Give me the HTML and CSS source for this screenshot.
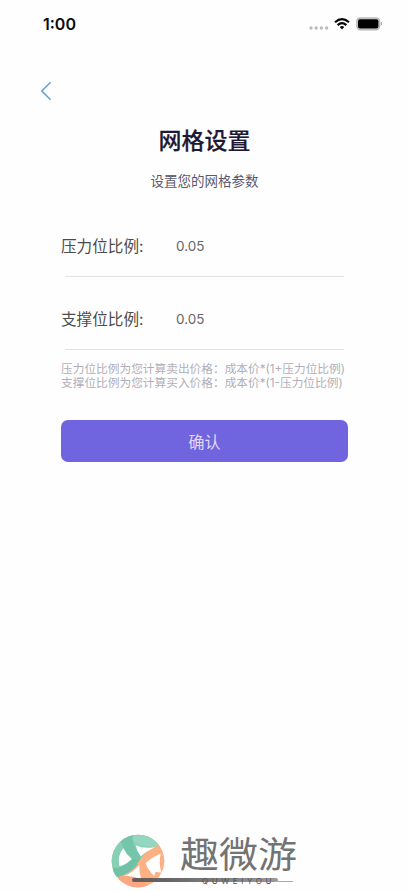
FILE: index.html
```html
<!DOCTYPE html>
<html lang="zh-CN">
<head>
<meta charset="utf-8">
<meta name="viewport" content="width=device-width, initial-scale=1">
<title>网格设置</title>
<link rel="stylesheet" href="styles.css">
</head>
<body>
<div class="screen">
  <header class="status">
    <span class="time">1:00</span>
    <div class="indicators">
      <svg class="dots" width="20" height="4" viewBox="0 0 20 4" fill="#bcbcbc"><circle cx="2" cy="2" r="1.7"/><circle cx="7.2" cy="2" r="1.7"/><circle cx="12.4" cy="2" r="1.7"/><circle cx="17.6" cy="2" r="1.7"/></svg>
      <svg class="wifi" width="16" height="12" viewBox="0 0 16 12" fill="none" stroke="#080808" stroke-width="2.2"><path d="M1 4.3Q8-1.9 15 4.3M3.6 7.1Q8 3.3 12.4 7.1"/><path d="M5.7 9Q8 7.1 10.3 9L8 11.5Z" fill="#080808" stroke="none"/></svg>
      <svg class="battery" width="27" height="14" viewBox="0 0 27 14"><rect x=".9" y=".9" width="22.6" height="11.8" rx="3.4" fill="#ddd" stroke="#b9b9b9" stroke-width="1.5"/><rect x="2" y="2.2" width="20.4" height="9.2" rx="2" fill="#000"/><path d="M24.8 4.8Q26.3 5.2 26.3 6.8T24.8 8.8Z" fill="#aaa"/></svg>
    </div>
  </header>
  <nav class="nav">
    <svg width="12" height="20" viewBox="0 0 12 20" fill="none" stroke="#64a2d6" stroke-width="1.6"><path d="M10.6 1.2L1.8 10l8.8 8.8"/></svg>
  </nav>
  <main class="main">
    <h1 class="title">网格设置</h1>
    <p class="subtitle">设置您的网格参数</p>
    <div class="field"><span class="label">压力位比例:</span><span class="value">0.05</span></div>
    <div class="field"><span class="label">支撑位比例:</span><span class="value">0.05</span></div>
    <div class="hints">
      <p class="hint">压力位比例为您计算卖出价格：<span>成本价*(1+压力位比例)</span></p>
      <p class="hint">支撑位比例为您计算买入价格：<span>成本价*(1-压力位比例)</span></p>
    </div>
    <button class="confirm" type="button">确认</button>
  </main>
  <footer class="brand">
    <svg class="logo" width="57" height="57" viewBox="0 0 171 171">
      <circle cx="84" cy="84" r="79" fill="#fcb183"/>
      <path fill="#fba882" d="M26 130Q60 124 92 140L112 158A79 79 0 0 1 24 136Z"/>
      <path fill="#86d0b6" d="M142 30Q112 48 92 80Q68 120 22 133A79 79 0 0 1 5 84A79 79 0 0 1 84 5A79 79 0 0 1 142 30Z"/>
      <path fill="#6fc1a7" d="M8 104Q26 108 42 97L72 76L93 80Q70 118 22 133Q10 122 8 104Z"/>
      <path fill="#75c5ab" d="M32 25Q48 11 70 7Q62 34 92 68L90 82L68 78Q40 54 32 25Z"/>
      <path fill="#94d6c0" d="M70 7Q114 0 142 30L148 38Q116 48 80 34Q62 22 70 7Z"/>
      <path fill="#fcb183" d="M148 38L158 58Q126 64 96 92L80 94Q104 54 148 38Z"/>
      <g fill="#fefefe">
        <path d="M40 46Q22 66 28 99Q44 99 65 78Q48 64 40 46Z"/>
        <path d="M77 37Q100 48 134 43Q108 56 92 70Q80 54 77 37Z"/>
        <path d="M152 62Q126 72 107 90Q112 110 132 128L137 116L155 119Q145 92 152 62Z"/>
        <path d="M88 95Q72 117 42 129Q68 127 94 139Q87 118 88 95Z"/>
      </g>
    </svg>
    <div class="home-bar"></div>
    <div class="wordmark">
      <div class="name">趣微游</div>
      <div class="latin"><span>QUWEIYOU</span></div>
    </div>
  </footer>
</div>
</body>
</html>
```
FILE: styles.css
```css
* { box-sizing: border-box; }
body {
  margin: 0;
  background: #fefefe;
  font-family: Inter, "Noto Sans CJK SC", sans-serif;
}
h1, p { margin: 0; font-weight: 400; }
svg { display: block; }
.screen {
  height: 891px;
  display: flex;
  flex-direction: column;
  overflow: hidden;
}
.status {
  height: 47px;
  padding: 0 26px 0 43px;
  display: flex;
  align-items: center;
  justify-content: space-between;
}
.time { font-size: 16px; font-weight: 600; color: #080808; }
.indicators { display: flex; align-items: center; }
.dots { margin: 8px 5px 0 0; }
.wifi { margin-right: 6px; }
.nav { padding: 34px 0 0 40px; }
.main {
  padding: 24px 61px 0;
  display: flex;
  flex-direction: column;
}
.title {
  font-size: 23px;
  line-height: 32px;
  font-weight: 500;
  text-align: center;
  color: #1d1935;
  -webkit-text-stroke: 0.2px #1d1935;
}
.subtitle {
  margin: 14px 0 13px;
  font-size: 13.5px;
  line-height: 20px;
  text-align: center;
  color: #5c586b;
}
.field {
  height: 73px;
  padding-top: 30px;
  display: flex;
  background: linear-gradient(#e2e2e4, #e2e2e4) 4px 100% / 279px 1px no-repeat;
}
.label {
  width: 115px;
  font-size: 15.6px;
  line-height: 25px;
  color: #4c4c4c;
}
.value {
  font-size: 13.5px;
  line-height: 25px;
  color: #666;
}
.hints { padding-top: 13px; }
.hint {
  display: flex;
  font-size: 11.7px;
  line-height: 13.5px;
  color: #b0aeb8;
  white-space: nowrap;
}
.confirm {
  width: 287px;
  height: 42px;
  margin-top: 30px;
  padding: 0;
  border: 0;
  border-radius: 7px;
  background: #7164df;
  color: #e0dbf8;
  font: 400 16px/41px "Noto Sans CJK SC", sans-serif;
}
.brand {
  position: relative;
  height: 58px;
  margin-top: auto;
  padding-left: 110px;
  display: flex;
}
.logo { flex: none; }
.wordmark {
  position: relative;
  margin-left: 13px;
  width: 118px;
}
.name {
  height: 44px;
  font: 400 39px/40px "Noto Sans CJK SC", sans-serif;
  color: #737373;
  white-space: nowrap;
  transform: scaleY(0.92);
  transform-origin: 0 8px;
}
.latin {
  display: flex;
  align-items: center;
  height: 9px;
  padding: 0 5px 0 22px;
  font-size: 8px;
  line-height: 9px;
  letter-spacing: 3.6px;
  color: #555;
}
.latin::after {
  content: "";
  flex: 1;
  height: 1px;
  background: #aaa;
}
.home-bar {
  position: absolute;
  left: 132px;
  top: 45px;
  width: 146px;
  height: 4px;
  border-radius: 2px;
  background: linear-gradient(90deg, #6b5953, #656565 25%, #808080 60%, #999);
}
```
